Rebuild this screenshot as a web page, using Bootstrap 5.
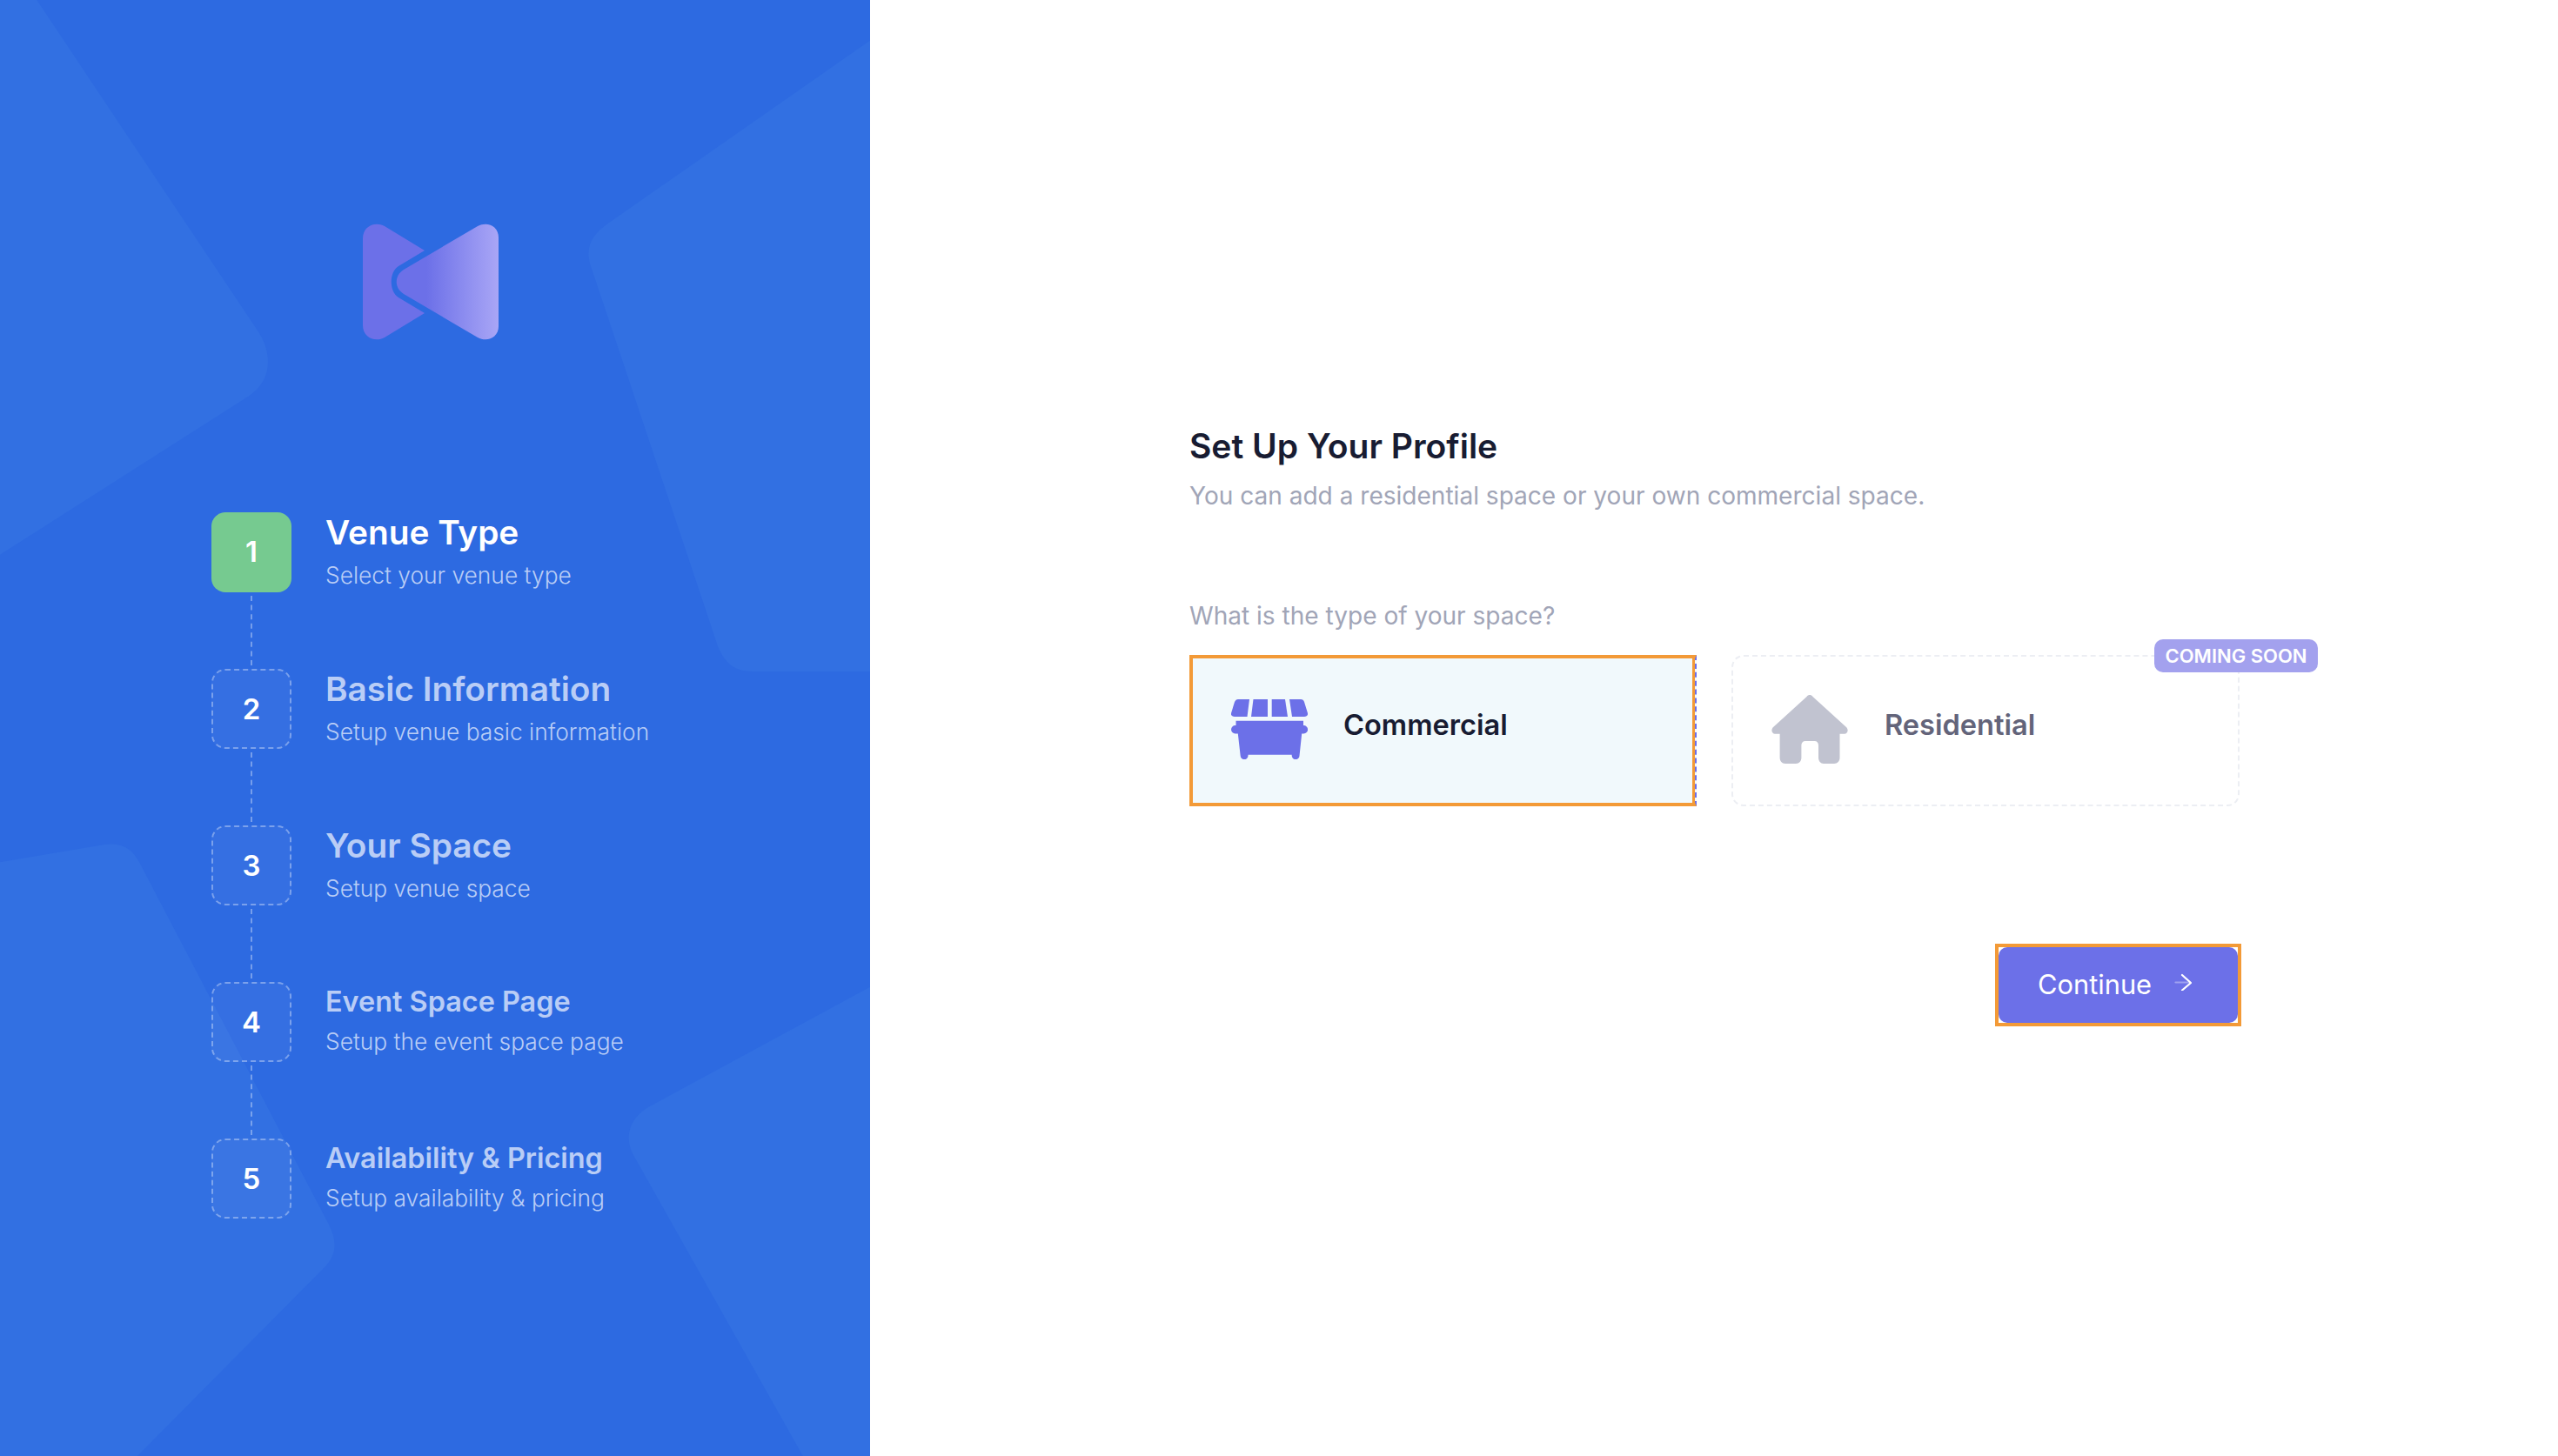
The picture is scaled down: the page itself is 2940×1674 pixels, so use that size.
<!DOCTYPE html>
<html lang="en">
<head>
  <meta charset="UTF-8" />
  <meta name="viewport" content="width=device-width, initial-scale=1" />
  <title>Set Up Your Profile</title>
  <link href="https://cdn.jsdelivr.net/npm/bootstrap@5.3.0/dist/css/bootstrap.min.css" rel="stylesheet" />
  <style>
    body {
      font-family: Inter, "Liberation Sans", sans-serif;
      background: #fff;
      min-height: 1674px;
    }

    .side-panel {
      width: 1000px;
      min-height: 1674px;
      background: #2d6ae1;
      padding-top: 257px;
      overflow: hidden;
    }

    .side-shapes {
      position: absolute;
      top: 0;
      left: 0;
    }

    .brand-logo {
      margin-bottom: 198px;
      padding-right: 10px;
    }

    .step-list {
      padding-left: 243px;
    }

    .step-item {
      height: 92px;
      gap: 39px;
    }

    .step-box {
      width: 92px;
      height: 92px;
      padding-top: 2px;
      border: 2px dashed rgba(255, 255, 255, 0.35);
      border-radius: 16px;
      background: rgba(255, 255, 255, 0.04);
      font-size: 33px;
      font-weight: 600;
      color: #fff;
    }

    .step-box.is-active {
      padding-top: 0;
      background: #76ca90;
      border: 0;
    }

    .step-link {
      height: 88px;
      margin-left: 45px;
      padding: 4px 0;
    }

    .step-link span {
      display: block;
      height: 100%;
      border-left: 2px dashed rgba(255, 255, 255, 0.35);
    }

    .step-title {
      color: #b9cdf6;
      font-size: 38.8px;
      font-weight: 600;
      line-height: 45px;
      white-space: nowrap;
    }

    .step-title.is-small {
      font-size: 32.4px;
    }

    .step-item.is-active .step-title {
      color: #fff;
    }

    .step-sub {
      color: #b9cdf6;
      font-size: 26.35px;
      font-weight: 300;
      line-height: 36px;
      margin-top: 9px;
      white-space: nowrap;
    }

    .step-title.is-small + .step-sub {
      margin-top: 5px;
    }

    .main-panel {
      padding: 489px 0 0 367px;
      width: 1576px;
    }

    .page-title {
      color: #181c32;
      font-size: 39px;
      font-weight: 600;
      line-height: 48px;
      margin-bottom: 13px;
    }

    .page-sub,
    .field-label {
      color: #a1a5b7;
      font-size: 28.05px;
      line-height: 40px;
      margin: 0;
    }

    .field-label {
      margin-top: 98px;
      margin-bottom: 25px;
    }

    .space-row {
      gap: 40px;
    }

    .space-card {
      height: 174px;
    }

    .space-card svg {
      margin-bottom: 3px;
    }

    .space-name {
      font-size: 32.6px;
      font-weight: 600;
      margin-bottom: 14px;
    }

    .space-commercial {
      width: 583px;
      padding-left: 44px;
      gap: 41px;
      background: #f1f9fc;
      border: 4px solid #f39a37;
      border-right: 2px dashed #6c70e8;
      box-shadow: inset -3px 0 0 #f39a37;
      color: #181c32;
    }

    .space-residential {
      width: 584px;
      padding-left: 44px;
      gap: 42px;
      border: 2px dashed #eceef3;
      border-radius: 14px;
      color: #63647a;
    }

    .soon-tag {
      position: absolute;
      top: -20px;
      right: -92px;
      width: 188px;
      height: 38px;
      border-radius: 10px;
      background: #a3a1ee;
      color: #fff;
      font-size: 22px;
      font-weight: 600;
    }

    .cta-frame {
      margin-top: 158px;
      width: 283px;
      height: 95px;
      border: 4px solid #f39a37;
    }

    .cta-btn {
      width: 100%;
      height: 100%;
      background: #6c70e8;
      border: 0;
      border-radius: 10px;
      color: #fff;
      font-size: 30.8px;
      padding: 0 0 0 45px;
      gap: 26px;
    }

    .cta-btn svg {
      margin-bottom: 8px;
    }
  </style>
</head>
<body>
  <div class="d-flex">
    <aside class="side-panel position-relative flex-shrink-0">
      <svg class="side-shapes" width="1000" height="1674" viewBox="0 0 1000 1674" fill="#3270e2">
        <g transform="translate(-5 -2)">
          <path d="M0 0H46L303 385C318 410 318 440 290 458L0 643Z" />
          <path d="M1010 45L705 258C685 272 678 285 683 305L830 745C838 765 850 774 870 774H1010Z" />
          <path d="M0 994L125 973C145 970 158 978 166 995L383 1410C393 1430 392 1445 377 1460L159 1680H0Z" />
          <path d="M1010 1134L750 1275C728 1288 722 1310 733 1330L930 1680H1010Z" />
        </g>
      </svg>

      <div class="position-relative">
        <div class="brand-logo text-center">
          <svg width="156" height="134" viewBox="0 0 156 134">
            <defs>
              <linearGradient id="logoFade" x1="73" y1="0" x2="156" y2="0" gradientUnits="userSpaceOnUse">
                <stop offset="0" stop-color="#6c70e8" />
                <stop offset="1" stop-color="#a9a6f6" />
              </linearGradient>
            </defs>
            <path fill="#6c70e8" d="M0 17C0 3 14 -3 25 3L71 31L41 49C30 56 30 78 41 85L71 103L25 131C14 137 0 131 0 117Z" />
            <path fill="url(#logoFade)" d="M156 16C156 3 143 -3 132 3L47 53C36 60 36 74 47 81L132 131C143 137 156 131 156 118Z" />
          </svg>
        </div>

        <div class="step-list">
          <div class="step-item is-active d-flex">
            <div class="step-box is-active d-flex align-items-center justify-content-center flex-shrink-0">1</div>
            <div>
              <div class="step-title">Venue Type</div>
              <div class="step-sub">Select your venue type</div>
            </div>
          </div>
          <div class="step-link"><span></span></div>
          <div class="step-item d-flex">
            <div class="step-box d-flex align-items-center justify-content-center flex-shrink-0">2</div>
            <div>
              <div class="step-title">Basic Information</div>
              <div class="step-sub">Setup venue basic information</div>
            </div>
          </div>
          <div class="step-link"><span></span></div>
          <div class="step-item d-flex">
            <div class="step-box d-flex align-items-center justify-content-center flex-shrink-0">3</div>
            <div>
              <div class="step-title">Your Space</div>
              <div class="step-sub">Setup venue space</div>
            </div>
          </div>
          <div class="step-link"><span></span></div>
          <div class="step-item d-flex">
            <div class="step-box d-flex align-items-center justify-content-center flex-shrink-0">4</div>
            <div>
              <div class="step-title is-small">Event Space Page</div>
              <div class="step-sub">Setup the event space page</div>
            </div>
          </div>
          <div class="step-link"><span></span></div>
          <div class="step-item d-flex">
            <div class="step-box d-flex align-items-center justify-content-center flex-shrink-0">5</div>
            <div>
              <div class="step-title is-small">Availability &amp; Pricing</div>
              <div class="step-sub">Setup availability &amp; pricing</div>
            </div>
          </div>
        </div>
      </div>
    </aside>

    <main class="main-panel">
      <h1 class="page-title">Set Up Your Profile</h1>
      <p class="page-sub">You can add a residential space or your own commercial space.</p>
      <p class="field-label">What is the type of your space?</p>

      <div class="space-row d-flex">
        <div class="space-card space-commercial d-flex align-items-center">
          <svg width="88" height="69" viewBox="0 0 88 69" fill="#6c70e8">
            <path d="M8 0H21L18.5 20H4C1 20 -0.5 18 0 16L4 3C5 1 6 0 8 0Z" />
            <path d="M25.5 0H42V20H23Z" />
            <path d="M46.7 0H62L65 20H46.7Z" />
            <path d="M67 0H80C82 0 83.5 1 84 3L88 16C88.5 18 87 20 84 20H70Z" />
            <path d="M5.5 24.7H83V30H83.4A4.7 4.7 0 0 1 83.4 39.4H81.2L78.5 65A4.4 4.4 0 0 1 69.7 64.6V63.7H19.5V64.6A4.4 4.4 0 0 1 10.7 65L7.8 39.4H4.7A4.7 4.7 0 0 1 4.7 30H5.5Z" />
          </svg>
          <span class="space-name">Commercial</span>
        </div>
        <div class="space-card space-residential position-relative d-flex align-items-center">
          <svg width="88" height="79" viewBox="0 0 88 79" fill="#c1c3d0">
            <path d="M40.5 2C42.5 -0.6 45.5 -0.6 47.5 2L86.5 37.5C89 41 87 44.7 84 44.7H78.5V72C78.5 76 76 79 72 79H60C56.5 79 54 76 54 72V58C54 55 52.5 53 49.5 53H39C36 53 34.4 55 34.4 58V72C34.4 76 32 79 28 79H16C12 79 9.6 76 9.6 72V44.7H4C1 44.7 -1 41 1.5 37.5Z" />
          </svg>
          <span class="space-name">Residential</span>
          <span class="soon-tag d-flex align-items-center justify-content-center">COMING SOON</span>
        </div>
      </div>

      <div class="d-flex justify-content-end">
        <div class="cta-frame">
          <button type="button" class="btn cta-btn d-flex align-items-center">
            <span>Continue</span>
            <svg width="20" height="20" viewBox="0 0 20 20" fill="none" stroke="#fff" stroke-width="2.2" stroke-linecap="round" stroke-linejoin="round">
              <path d="M1.5 10.5H18" opacity="0.35" />
              <path d="M9 2L19 11L9 19.5" />
            </svg>
          </button>
        </div>
      </div>
    </main>
  </div>

  <script src="https://cdn.jsdelivr.net/npm/bootstrap@5.3.0/dist/js/bootstrap.bundle.min.js"></script>
</body>
</html>
